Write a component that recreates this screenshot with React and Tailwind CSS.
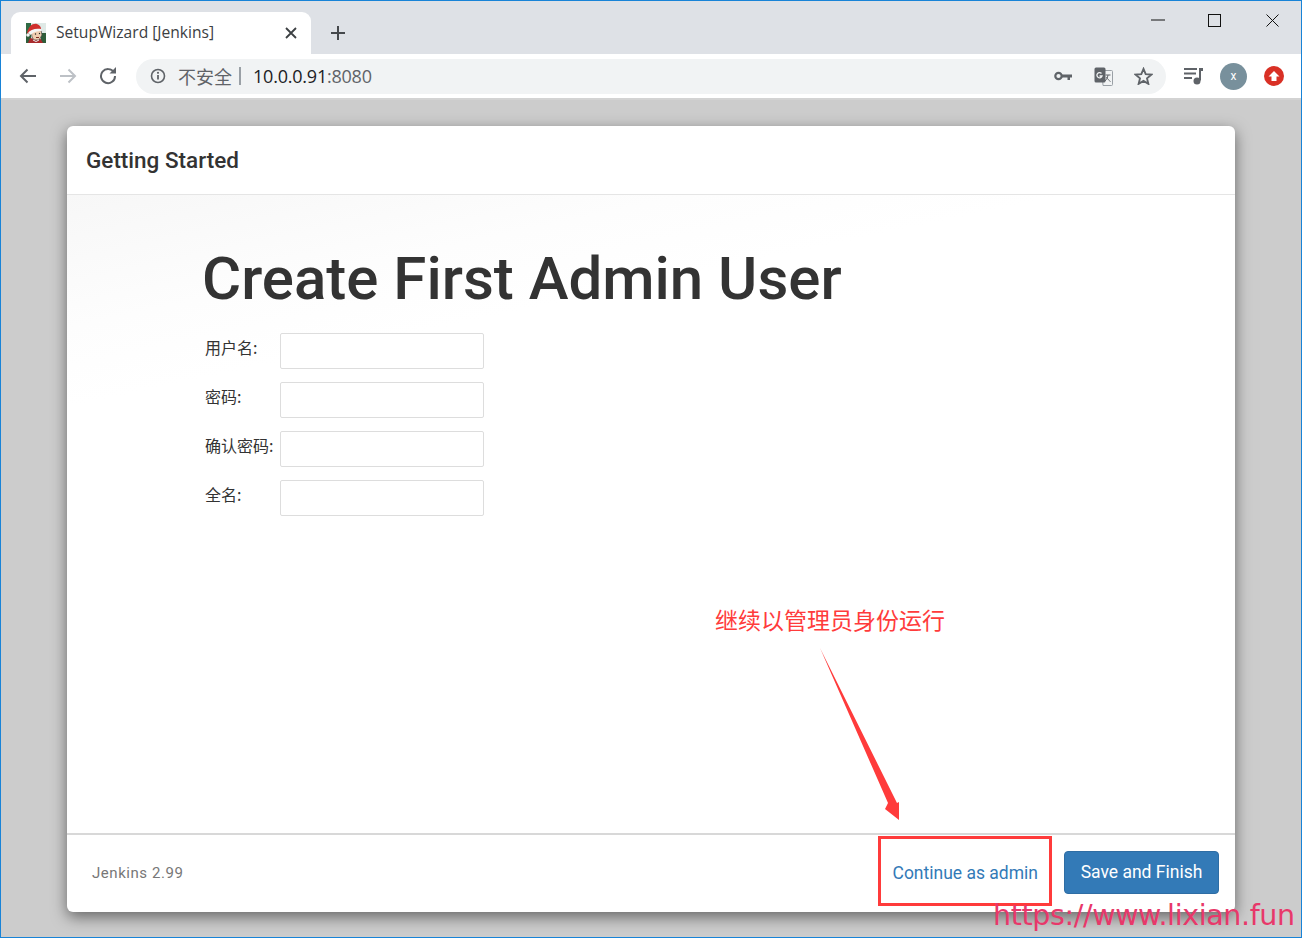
import React from "react";

const sans = "font-['Roboto','Liberation_Sans','Noto_Sans_CJK_SC',sans-serif]";

function Favicon() {
  return (
    <svg width="20" height="20" viewBox="0 0 20 20" className="shrink-0">
      <rect x="0" y="0" width="20" height="20" fill="#dfe9e6" />
      <rect x="0" y="0" width="5" height="9" fill="#2f6b45" />
      <rect x="0" y="9" width="5" height="11" fill="#2f5d3a" />
      <rect x="15" y="10" width="5" height="10" fill="#2f5d3a" />
      <path d="M2 20l2-5 5 1 5-1 3 5z" fill="#a92a2c" />
      <path d="M5 7h10l1 5-3 5H8l-2-3z" fill="#efcdb0" stroke="#444" strokeWidth="0.7" />
      <path d="M1 11C2 3 7 0 11 1c3 1 4 3 4 5L6 8z" fill="#d0302d" />
      <path d="M2 10c2-3 7-5 13-4l1 2c-5 0-9 1-11 4z" fill="#f4f4f4" />
      <circle cx="2" cy="12" r="1.800" fill="#f4f4f4" />
      <circle cx="9.500" cy="11" r="0.700" fill="#222" />
      <circle cx="13.500" cy="10.500" r="0.700" fill="#222" />
      <path d="M10 14.500h3" stroke="#7a2b20" strokeWidth="1" />
      <path d="M7 17l3 1.500 3-1.500" stroke="#eee" strokeWidth="1" fill="none" />
    </svg>
  );
}

function Field({ label }) {
  return (
    <div className="flex h-9 items-start">
      <label className="w-[75px] pt-[4px] font-['Noto_Sans_CJK_SC','Roboto',sans-serif] text-[16px] leading-[20px] text-[#333]">{label}</label>
      <div className="h-9 w-[204px] rounded-[2px] border border-[#ddd] bg-white" />
    </div>
  );
}

export default function App() {
  return (
    <div className={`relative flex h-[938px] w-[1302px] flex-col overflow-hidden border border-[#1883d7] bg-[#cccccc] ${sans}`}>
      {/* tab strip */}
      <div className="flex h-[53px] shrink-0 items-end bg-[#dee1e6] pl-[10px]">
        <div className="flex h-[42px] w-[300px] items-center rounded-t-[9px] bg-white pb-[1px] pl-[15px] pr-[14px]">
          <Favicon />
          <span className="ml-[10px] flex-1 font-['Open_Sans','Noto_Sans',sans-serif] text-[15.600px] text-[#3c4043]">SetupWizard [Jenkins]</span>
          <svg width="12" height="12" viewBox="0 0 12 12"><path d="M1 1l10 10M11 1L1 11" stroke="#3c4043" strokeWidth="1.800" /></svg>
        </div>
        <div className="flex h-[42px] items-center pb-[1px] pl-[19px]">
          <svg width="16" height="16" viewBox="0 0 16 16"><path d="M8 1v14M1 8h14" stroke="#45484c" strokeWidth="2" /></svg>
        </div>
        <div className="ml-auto flex h-full items-start">
          <div className="flex h-[38px] w-[57px] items-center justify-center">
            <svg width="14" height="2" viewBox="0 0 14 2"><path d="M0 1h14" stroke="#111" strokeWidth="1" /></svg>
          </div>
          <div className="flex h-[38px] w-[57px] items-center justify-center">
            <svg width="13" height="13" viewBox="0 0 13 13"><rect x="0.500" y="0.500" width="12" height="12" fill="none" stroke="#111" strokeWidth="1" /></svg>
          </div>
          <div className="flex h-[38px] w-[58px] items-center justify-center">
            <svg width="13" height="13" viewBox="0 0 13 13"><path d="M0.500 0.500l12 12M12.500 0.500l-12 12" stroke="#111" strokeWidth="1" /></svg>
          </div>
        </div>
      </div>

      {/* toolbar */}
      <div className="flex h-[46px] shrink-0 items-center border-b-2 border-[#d3d3d3] bg-white">
        <div className="flex w-[135px] shrink-0 items-center pl-[18px]">
          <svg width="18" height="16" viewBox="0 0 18 16"><path d="M17 8H2M8.500 1.500L2 8l6.500 6.500" fill="none" stroke="#5f6368" strokeWidth="2" /></svg>
          <svg className="ml-[22px]" width="18" height="16" viewBox="0 0 18 16"><path d="M1 8h15M9.500 1.500L16 8l-6.500 6.500" fill="none" stroke="#bdc1c6" strokeWidth="2" /></svg>
          <svg className="ml-[22px]" width="18" height="18" viewBox="0 0 18 18"><path d="M15 5.500A7 7 0 1 0 16 9" fill="none" stroke="#5f6368" strokeWidth="2" /><path d="M10.500 6.500H17V0z" fill="#5f6368" /></svg>
        </div>
        <div className="flex h-[35px] w-[1030px] items-center rounded-full bg-[#f1f3f4] pl-[14px] pr-[13px]">
          <svg width="16" height="16" viewBox="0 0 16 16" className="shrink-0"><circle cx="8" cy="8" r="6.500" fill="none" stroke="#5f6368" strokeWidth="1.600" /><path d="M8 7v4.500" stroke="#5f6368" strokeWidth="1.800" /><circle cx="8" cy="4.800" r="1.100" fill="#5f6368" /></svg>
          <span className="ml-[12px] font-['Noto_Sans_CJK_SC',sans-serif] text-[18px] leading-none text-[#5f6368]">不安全</span>
          <span className="ml-[7px] h-[18px] w-[2px] bg-[#9aa0a6]" />
          <span className="ml-[12px] font-['Open_Sans','Noto_Sans',sans-serif] text-[18px] leading-none tracking-[-0.220px] text-[#202124]">10.0.0.91<span className="text-[#5f6368]">:8080</span></span>
          <div className="ml-auto flex items-center">
            <svg width="18" height="10" viewBox="0 0 18 10"><circle cx="4.500" cy="5" r="3.200" fill="none" stroke="#5f6368" strokeWidth="2.200" /><path d="M8 3.500h10v3h-2v2.500h-2.500V6.500H8z" fill="#5f6368" /></svg>
            <svg className="ml-[22px]" width="19" height="19" viewBox="0 0 19 19"><path d="M8 3.500h9.500a1 1 0 0 1 1 1v13a1 1 0 0 1-1 1H9z" fill="#f1f3f4" stroke="#9aa0a6" strokeWidth="1" /><rect x="0.500" y="0.500" width="11" height="15" rx="1.500" fill="#5f6368" /><path d="M7.500 6.500A2.600 2.600 0 1 0 8 9H5.500" fill="none" stroke="#f1f3f4" strokeWidth="1.300" /><path d="M11.500 8h5M14 8c-.5 3-1.500 4.500-3 6M12.500 10c1 2 2.500 3.500 4 4.500" fill="none" stroke="#5f6368" strokeWidth="1" /></svg>
            <svg className="ml-[21px]" width="19" height="18" viewBox="0 0 24 23"><path d="M12 2.500l2.800 6.700 7.200.6-5.500 4.700 1.700 7-6.200-3.700-6.200 3.700 1.700-7L2 9.800l7.200-.6z" fill="none" stroke="#5f6368" strokeWidth="2.400" /></svg>
          </div>
        </div>
        <div className="flex flex-1 items-center pl-[18px]">
          <svg width="19" height="18" viewBox="0 0 19 18"><path d="M0 2h13M0 6.500h12M0 11h8" stroke="#5f6368" strokeWidth="1.800" /><path d="M16 1v12.500" stroke="#5f6368" strokeWidth="2" /><path d="M16 1h3v3h-3z" fill="#5f6368" /><circle cx="13" cy="14" r="3.500" fill="#5f6368" /></svg>
          <div className="ml-[17px] flex h-[27px] w-[27px] items-center justify-center rounded-full bg-[#78909c] text-[12px] text-white">x</div>
          <div className="ml-[17px] flex h-5 w-5 items-center justify-center rounded-full bg-[#d93025]">
            <svg width="12" height="12" viewBox="0 0 12 12"><path d="M6 1l5.500 5.500H8.500V11h-5V6.500H.5z" fill="#fff" /></svg>
          </div>
        </div>
      </div>

      {/* page */}
      <div className="flex min-h-0 flex-1 px-[66px] pb-[25px] pt-[26px]">
        <div className="flex w-[1168px] flex-col overflow-hidden rounded-[6px] bg-white shadow-[0_5px_15px_rgba(0,0,0,0.5)]">
          <div className="flex h-[69px] shrink-0 items-center border-b border-[#e5e5e5] pl-[19px]">
            <h4 className="text-[22.500px] font-medium leading-none text-[#333]">Getting Started</h4>
          </div>
          <div className="flex-1 bg-[linear-gradient(168deg,#f7f7f7_0%,#fdfdfd_15%,#ffffff_24%)] pl-[135px] pt-[49px]">
            <h1 className="text-[60px] font-medium leading-[70px] text-[#333]">Create First Admin User</h1>
            <div className="mt-[19px] flex flex-col gap-[13px] pl-[3px]">
              <Field label="用户名:" />
              <Field label="密码:" />
              <Field label="确认密码:" />
              <Field label="全名:" />
            </div>
          </div>
          <div className="flex h-[79px] shrink-0 items-center justify-between border-t-2 border-[#d8d8d8] pl-[25px] pr-[16px]">
            <span className="text-[15px] tracking-[0.550px] text-[#777]">Jenkins 2.99</span>
            <div className="flex items-center gap-[26px]">
              <span className="text-[17.500px] text-[#337ab7]">Continue as admin</span>
              <button className="mb-[2px] flex h-[43px] w-[155px] items-center justify-center rounded-[4px] border border-[#2e6da4] bg-[#337ab7] text-[17.500px] text-white">Save and Finish</button>
            </div>
          </div>
        </div>
      </div>

      {/* annotations */}
      <div className="absolute left-[714px] top-[602px] font-['Noto_Sans_CJK_SC',sans-serif] text-[23px] leading-[32px] text-[#ff3b3b]">继续以管理员身份运行</div>
      <svg className="absolute left-[799px] top-[639px]" width="110" height="190" viewBox="0 0 110 190">
        <path d="M20 8L97 163l2-1v18L85 169l3-6z" fill="#ff3b3b" />
      </svg>
      <div className="absolute left-[877px] top-[835px] h-[70px] w-[174px] border-[3px] border-[#ff3b3b]" />
      <div className="absolute left-[992px] top-[895px] font-['DejaVu_Sans',sans-serif] text-[28.500px] leading-[40px] tracking-[-0.370px] text-[#e8386a]">https://www.lixian.fun</div>
    </div>
  );
}
